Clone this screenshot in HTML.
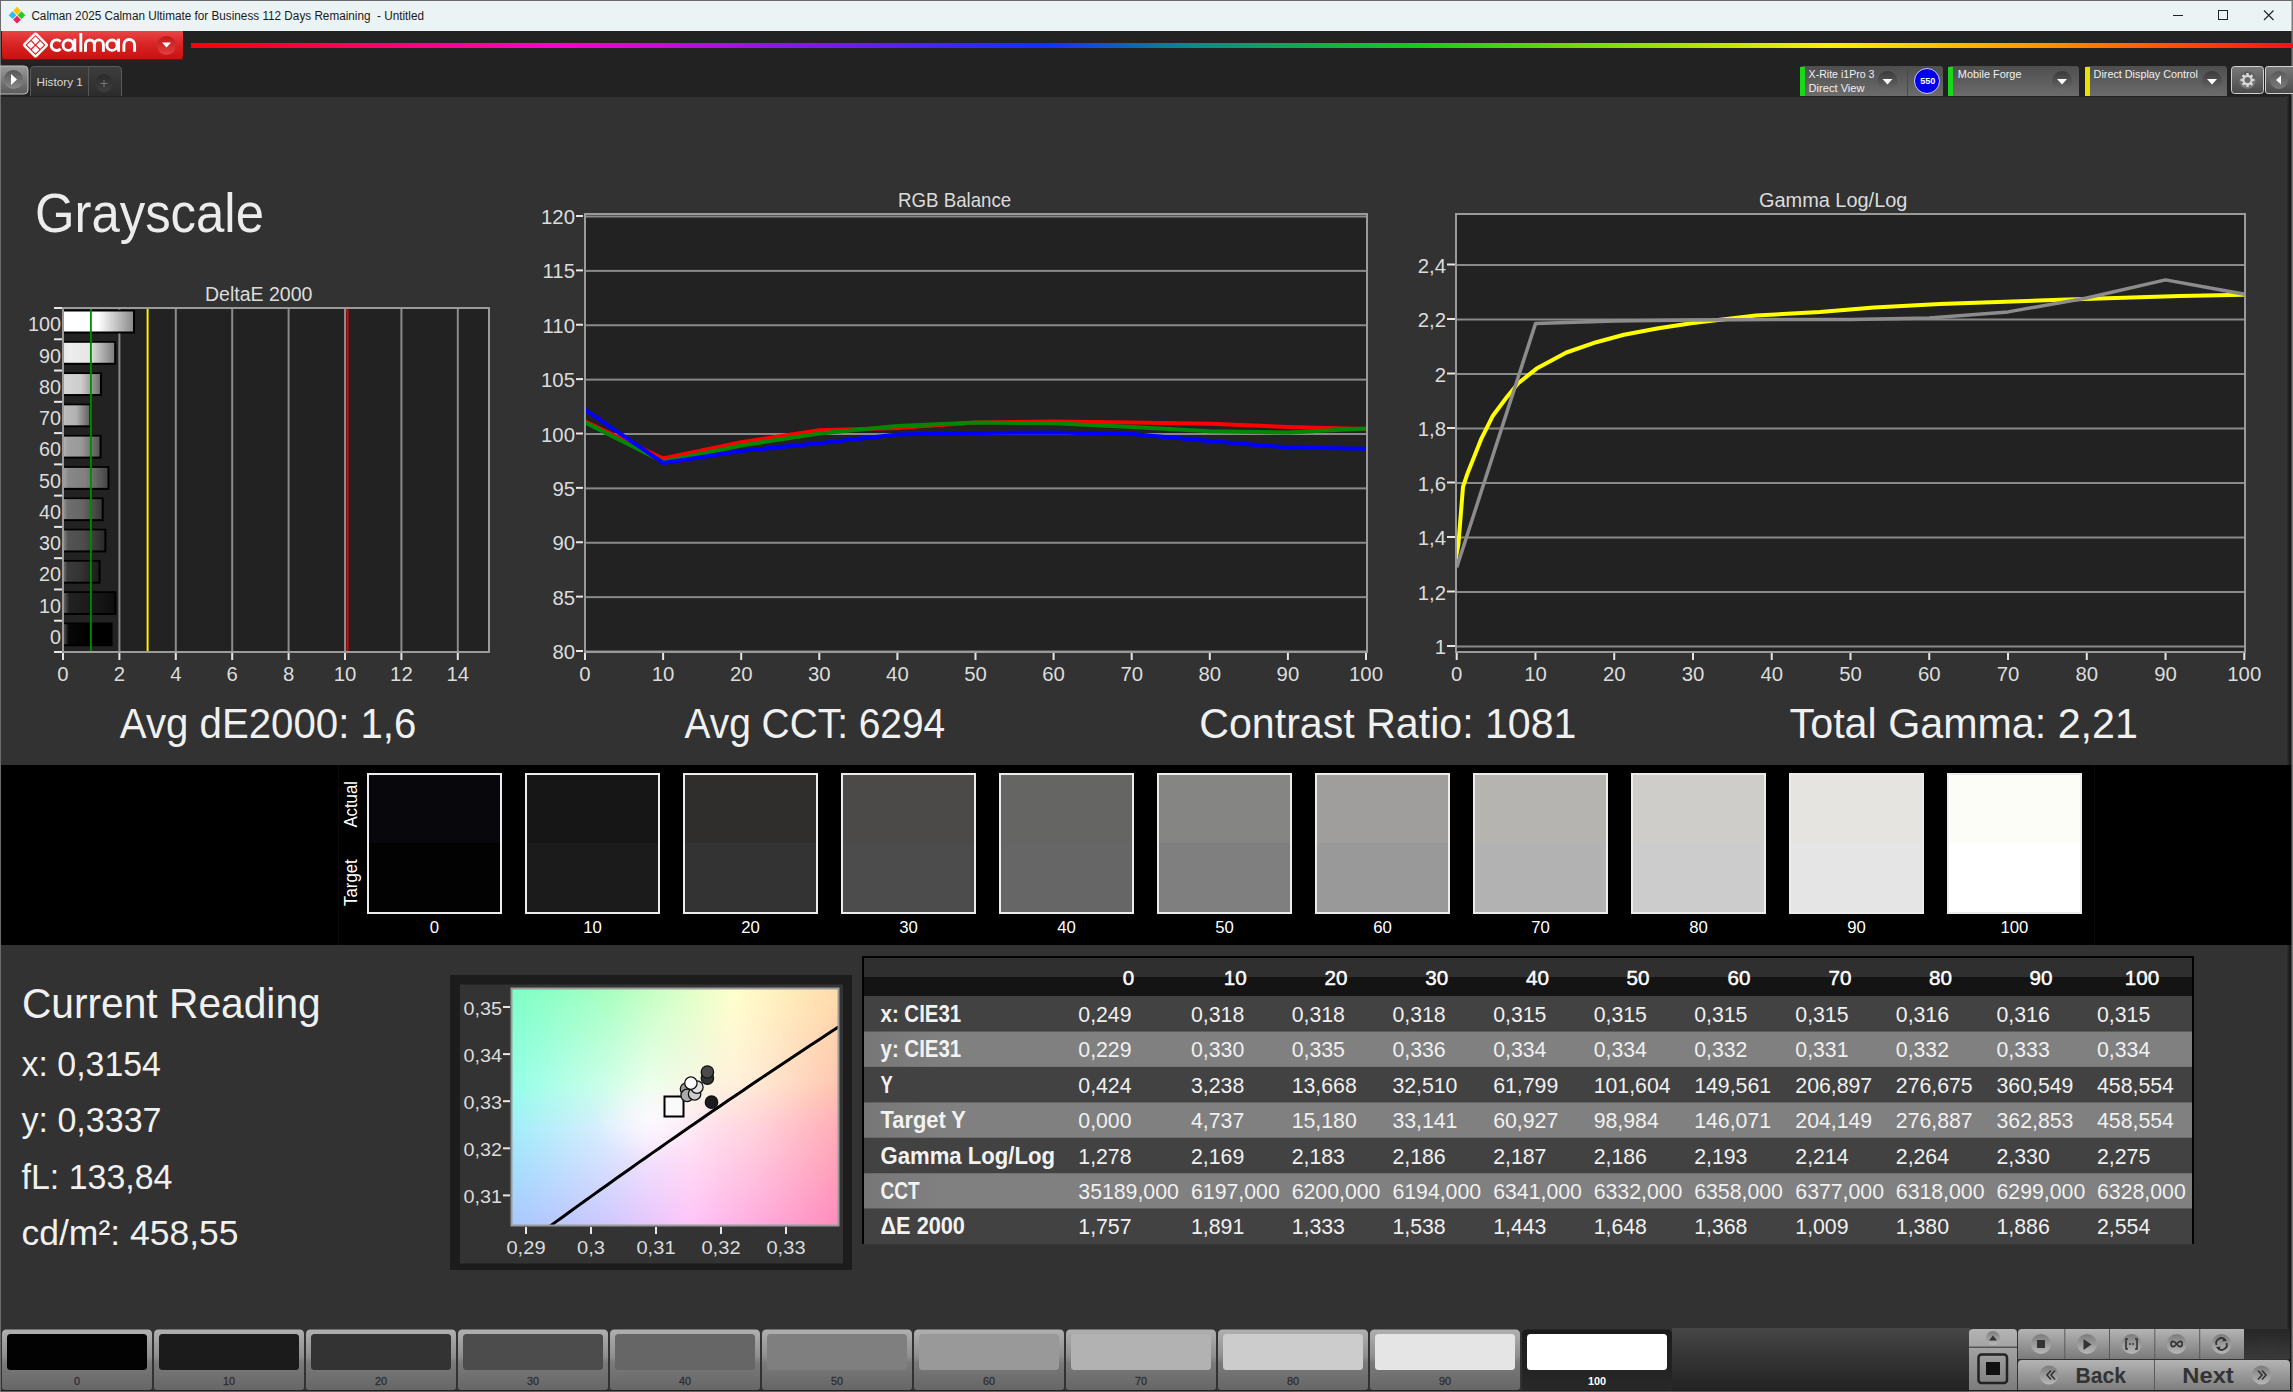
<!DOCTYPE html>
<html><head><meta charset="utf-8"><title>Calman Grayscale</title>
<style>html,body{margin:0;padding:0;background:#333;overflow:hidden;width:2293px;height:1392px}
svg{display:block;font-family:"Liberation Sans",sans-serif} text{white-space:pre}</style></head>
<body><svg width="2293" height="1392" viewBox="0 0 2293 1392">
<defs><linearGradient id="redge" x1="0" y1="0" x2="1" y2="0"><stop offset="0" stop-color="#333333"/><stop offset="1" stop-color="#0e0e0e"/></linearGradient><linearGradient id="redbar" x1="0" y1="0" x2="0" y2="1"><stop offset="0" stop-color="#e84545"/><stop offset="0.45" stop-color="#d92525"/><stop offset="1" stop-color="#c80f0f"/></linearGradient><linearGradient id="reddd" x1="0" y1="0" x2="0" y2="1"><stop offset="0" stop-color="#c01818"/><stop offset="1" stop-color="#e04040"/></linearGradient><linearGradient id="rainbow" x1="0" y1="0" x2="1" y2="0"><stop offset="0" stop-color="#ff0000"/><stop offset="0.17" stop-color="#ff00cc"/><stop offset="0.405" stop-color="#1030ff"/><stop offset="0.475" stop-color="#0a8a8a"/><stop offset="0.585" stop-color="#18cc18"/><stop offset="0.782" stop-color="#ffee00"/><stop offset="0.892" stop-color="#ff8800"/><stop offset="1" stop-color="#ff1010"/></linearGradient><linearGradient id="playbtn" x1="0" y1="0" x2="0" y2="1"><stop offset="0" stop-color="#9a9a9a"/><stop offset="1" stop-color="#5a5a5a"/></linearGradient><linearGradient id="playc" x1="0" y1="0" x2="0" y2="1"><stop offset="0" stop-color="#555"/><stop offset="1" stop-color="#8a8a8a"/></linearGradient><linearGradient id="tabbg" x1="0" y1="0" x2="0" y2="1"><stop offset="0" stop-color="#3d3d3d"/><stop offset="1" stop-color="#2c2c2c"/></linearGradient><linearGradient id="plusc" x1="0" y1="0" x2="0" y2="1"><stop offset="0" stop-color="#2a2a2a"/><stop offset="1" stop-color="#3e3e3e"/></linearGradient><linearGradient id="panel" x1="0" y1="0" x2="0" y2="1"><stop offset="0" stop-color="#4e4e4e"/><stop offset="1" stop-color="#6c6c6c"/></linearGradient><linearGradient id="ddc" x1="0" y1="0" x2="0" y2="1"><stop offset="0" stop-color="#3a3a3a"/><stop offset="1" stop-color="#6a6a6a"/></linearGradient><linearGradient id="gearbtn" x1="0" y1="0" x2="0" y2="1"><stop offset="0" stop-color="#7a7a7a"/><stop offset="1" stop-color="#4a4a4a"/></linearGradient><linearGradient id="gearc" x1="0" y1="0" x2="0" y2="1"><stop offset="0" stop-color="#5a5a5a"/><stop offset="1" stop-color="#7a7a7a"/></linearGradient><linearGradient id="bar0" x1="0" y1="0" x2="1" y2="0"><stop offset="0" stop-color="#ffffff"/><stop offset="0.12" stop-color="#ffffff"/><stop offset="0.5" stop-color="#ffffff"/><stop offset="1" stop-color="#8c8c8c"/></linearGradient><linearGradient id="bar1" x1="0" y1="0" x2="1" y2="0"><stop offset="0" stop-color="#e6e6e6"/><stop offset="0.12" stop-color="#eeeeee"/><stop offset="0.5" stop-color="#e6e6e6"/><stop offset="1" stop-color="#7e7e7e"/></linearGradient><linearGradient id="bar2" x1="0" y1="0" x2="1" y2="0"><stop offset="0" stop-color="#d4d4d4"/><stop offset="0.12" stop-color="#d4d4d4"/><stop offset="0.5" stop-color="#cccccc"/><stop offset="1" stop-color="#707070"/></linearGradient><linearGradient id="bar3" x1="0" y1="0" x2="1" y2="0"><stop offset="0" stop-color="#c4c4c4"/><stop offset="0.12" stop-color="#bababa"/><stop offset="0.5" stop-color="#b2b2b2"/><stop offset="1" stop-color="#616161"/></linearGradient><linearGradient id="bar4" x1="0" y1="0" x2="1" y2="0"><stop offset="0" stop-color="#b5b5b5"/><stop offset="0.12" stop-color="#a1a1a1"/><stop offset="0.5" stop-color="#999999"/><stop offset="1" stop-color="#545454"/></linearGradient><linearGradient id="bar5" x1="0" y1="0" x2="1" y2="0"><stop offset="0" stop-color="#a6a6a6"/><stop offset="0.12" stop-color="#888888"/><stop offset="0.5" stop-color="#808080"/><stop offset="1" stop-color="#464646"/></linearGradient><linearGradient id="bar6" x1="0" y1="0" x2="1" y2="0"><stop offset="0" stop-color="#979797"/><stop offset="0.12" stop-color="#6e6e6e"/><stop offset="0.5" stop-color="#666666"/><stop offset="1" stop-color="#383838"/></linearGradient><linearGradient id="bar7" x1="0" y1="0" x2="1" y2="0"><stop offset="0" stop-color="#878787"/><stop offset="0.12" stop-color="#545454"/><stop offset="0.5" stop-color="#4c4c4c"/><stop offset="1" stop-color="#292929"/></linearGradient><linearGradient id="bar8" x1="0" y1="0" x2="1" y2="0"><stop offset="0" stop-color="#787878"/><stop offset="0.12" stop-color="#3b3b3b"/><stop offset="0.5" stop-color="#333333"/><stop offset="1" stop-color="#1c1c1c"/></linearGradient><linearGradient id="bar9" x1="0" y1="0" x2="1" y2="0"><stop offset="0" stop-color="#696969"/><stop offset="0.12" stop-color="#222222"/><stop offset="0.5" stop-color="#1a1a1a"/><stop offset="1" stop-color="#0e0e0e"/></linearGradient><linearGradient id="bar10" x1="0" y1="0" x2="1" y2="0"><stop offset="0" stop-color="#5a5a5a"/><stop offset="0.12" stop-color="#080808"/><stop offset="0.5" stop-color="#000000"/><stop offset="1" stop-color="#000000"/></linearGradient><linearGradient id="cieTop" x1="0" y1="0" x2="1" y2="0"><stop offset="0" stop-color="#7dffc6"/><stop offset="0.3" stop-color="#a8ffc0"/><stop offset="0.68" stop-color="#ffffcc"/><stop offset="1" stop-color="#ffdcaa"/></linearGradient><linearGradient id="cieBot" x1="0" y1="0" x2="1" y2="0"><stop offset="0" stop-color="#a8c8ff"/><stop offset="0.3" stop-color="#d0c8ff"/><stop offset="0.55" stop-color="#ffc4f8"/><stop offset="1" stop-color="#ff8cbc"/></linearGradient><linearGradient id="cieMid" x1="0" y1="0" x2="1" y2="0"><stop offset="0" stop-color="#9ffff8"/><stop offset="0.42" stop-color="#ffffff"/><stop offset="0.75" stop-color="#ffe4dc"/><stop offset="1" stop-color="#ffbcb4"/></linearGradient><linearGradient id="fadeTop" x1="0" y1="0" x2="0" y2="1"><stop offset="0" stop-color="#fff"/><stop offset="1" stop-color="#000"/></linearGradient><mask id="mTop" maskContentUnits="objectBoundingBox"><rect width="1" height="1" fill="url(#fadeTop)"/></mask><linearGradient id="fadeBot" x1="0" y1="0" x2="0" y2="1"><stop offset="0" stop-color="#000"/><stop offset="1" stop-color="#fff"/></linearGradient><mask id="mBot" maskContentUnits="objectBoundingBox"><rect width="1" height="1" fill="url(#fadeBot)"/></mask><radialGradient id="cieW" cx="0.43" cy="0.55" r="0.18"><stop offset="0" stop-color="#fff" stop-opacity="0.6"/><stop offset="1" stop-color="#fff" stop-opacity="0"/></radialGradient><linearGradient id="thead" x1="0" y1="0" x2="0" y2="1"><stop offset="0" stop-color="#2f2f2f"/><stop offset="0.5" stop-color="#2f2f2f"/><stop offset="0.5" stop-color="#141414"/><stop offset="1" stop-color="#141414"/></linearGradient><linearGradient id="lrow" x1="0" y1="0" x2="1" y2="0"><stop offset="0" stop-color="#777777"/><stop offset="0.06" stop-color="#808080"/><stop offset="1" stop-color="#808080"/></linearGradient><linearGradient id="tbdark" x1="0" y1="0" x2="0" y2="1"><stop offset="0" stop-color="#474747"/><stop offset="0.5" stop-color="#333333"/><stop offset="1" stop-color="#222222"/></linearGradient><linearGradient id="swbtn" x1="0" y1="0" x2="0" y2="1"><stop offset="0" stop-color="#b0b0b0"/><stop offset="0.45" stop-color="#8e8e8e"/><stop offset="0.55" stop-color="#7a7a7a"/><stop offset="1" stop-color="#666666"/></linearGradient><linearGradient id="swsel" x1="0" y1="0" x2="0" y2="1"><stop offset="0" stop-color="#1a1a1a"/><stop offset="1" stop-color="#282828"/></linearGradient><linearGradient id="ctl" x1="0" y1="0" x2="0" y2="1"><stop offset="0" stop-color="#b4b4b4"/><stop offset="1" stop-color="#7a7a7a"/></linearGradient><linearGradient id="ctlc" x1="0" y1="0" x2="0" y2="1"><stop offset="0" stop-color="#7c7c7c"/><stop offset="1" stop-color="#b8b8b8"/></linearGradient><linearGradient id="dkc" x1="0" y1="0" x2="0" y2="1"><stop offset="0" stop-color="#2a2a2a"/><stop offset="1" stop-color="#383838"/></linearGradient><linearGradient id="dkbg" x1="0" y1="0" x2="0" y2="1"><stop offset="0" stop-color="#262626"/><stop offset="1" stop-color="#3a3a3a"/></linearGradient></defs>
<rect x="0.00" y="0.00" width="2293.00" height="1392.00" fill="#323232" />
<rect x="0.00" y="0.00" width="2293.00" height="31.00" fill="#ebf3f5" />
<rect x="0.00" y="0.00" width="2293.00" height="1.00" fill="#6b6b6b" />
<rect x="0.00" y="0.00" width="1.00" height="1392.00" fill="#6b6b6b" />
<rect x="1.00" y="31.00" width="2293.00" height="66.00" fill="#222222" />
<rect x="1.00" y="765.00" width="2293.00" height="180.00" fill="#000000" />
<rect x="338.00" y="765.00" width="1.00" height="180.00" fill="#0b0b0b" />
<rect x="2094.00" y="765.00" width="1.00" height="180.00" fill="#0b0b0b" />
<rect x="2286.50" y="96.00" width="5.00" height="669.00" fill="url(#redge)" />
<rect x="2286.50" y="945.00" width="5.00" height="447.00" fill="url(#redge)" />
<rect x="2291.50" y="0.00" width="1.50" height="1392.00" fill="#7a7a7a" />
<g transform="translate(17,15.2) rotate(45)"><rect x="-5.9" y="-5.9" width="5.5" height="5.5" fill="#ffc400"/><rect x="0.4" y="-5.9" width="5.5" height="5.5" fill="#22cc22"/><rect x="-5.9" y="0.4" width="5.5" height="5.5" fill="#33bbee"/><rect x="0.4" y="0.4" width="5.5" height="5.5" fill="#ee2255"/></g>
<text x="31.40" y="20.40" font-size="13.66" font-weight="normal" fill="#1a1a1a" textLength="392.62" lengthAdjust="spacingAndGlyphs" >Calman 2025 Calman Ultimate for Business 112 Days Remaining  - Untitled</text>
<rect x="2173.00" y="15.00" width="10.00" height="1.00" fill="#222" />
<rect x="2218.5" y="10.5" width="9" height="9" fill="none" stroke="#222" stroke-width="1"/>
<path d="M2264 10.5 L2273.5 20 M2273.5 10.5 L2264 20" stroke="#222" stroke-width="1.1" fill="none"/>
<path d="M2 31 H183 V56 Q183 60 179 60 H6 Q2 60 2 56 Z" fill="url(#redbar)"/>
<path d="M2 59.5 H183" stroke="#7a1010" stroke-width="1"/>
<g transform="translate(35.5,45) rotate(45)"><rect x="-8.3" y="-8.3" width="16.6" height="16.6" rx="1.2" fill="none" stroke="#fff" stroke-width="2.4"/><rect x="-6.0" y="-6.0" width="5.4" height="5.4" fill="#fff"/><rect x="0.6" y="-6.0" width="5.4" height="5.4" fill="#fff"/><rect x="-6.0" y="0.6" width="5.4" height="5.4" fill="#fff"/><rect x="0.6" y="0.6" width="5.4" height="5.4" fill="#fff"/></g>
<g fill="none" stroke="#ffffff" stroke-width="2.9"><path d="M60.58 41.62 A5.35 5.35 0 1 0 60.58 48.78"/><circle cx="68.2" cy="45.2" r="5.15"/><path d="M74.8 38.7 V51.8"/><path d="M80.8 33.1 V51.8"/><path d="M85.5 51.8 V44.4 A4.45 4.45 0 0 1 94.4 44.4 V51.8 M94.4 44.4 A4.5 4.5 0 0 1 103.4 44.4 V51.8"/><circle cx="112" cy="45.2" r="5.15"/><path d="M118.6 38.7 V51.8"/><path d="M123.9 51.8 V44.9 A5.35 5.35 0 0 1 134.6 44.9 V51.8"/></g>
<circle cx="166.5" cy="45.5" r="9.5" fill="url(#reddd)"/>
<path d="M162 42.5 H171 L166.5 47.5 Z" fill="#fff"/>
<rect x="191.00" y="43.00" width="2102.00" height="5.00" fill="url(#rainbow)" />
<path d="M0 66 H24 Q28 66 28 70 V90 Q28 94 24 94 H0 Z" fill="url(#playbtn)" stroke="#bdbdbd" stroke-width="1"/>
<circle cx="13.5" cy="79.5" r="9.5" fill="url(#playc)"/>
<path d="M11 74 L17 79.5 L11 85 Z" fill="#fff"/>
<path d="M30.5 96 V70 Q30.5 66.5 34 66.5 H118 Q121.5 66.5 121.5 70 V96" fill="url(#tabbg)" stroke="#5a5a5a" stroke-width="1"/>
<rect x="88.00" y="67.00" width="1.00" height="29.00" fill="#555" />
<text x="36.50" y="86.10" font-size="11.77" font-weight="normal" fill="#d8d8d8" textLength="46.40" lengthAdjust="spacingAndGlyphs" >History 1</text>
<circle cx="104" cy="83" r="9" fill="url(#plusc)"/>
<path d="M100.5 83.5 H107.5 M104 80 V87" stroke="#777" stroke-width="1"/>
<path d="M1800 96 V69 Q1800 66 1803 66 H1940 Q1943 66 1943 69 V96 Z" fill="url(#panel)"/>
<rect x="1800.00" y="67.00" width="5.00" height="29.00" fill="#18d818" />
<rect x="1907.00" y="69.00" width="1.00" height="27.00" fill="#4a4a4a" />
<text x="1808.60" y="77.90" font-size="11.48" font-weight="normal" fill="#f0f0f0" textLength="65.90" lengthAdjust="spacingAndGlyphs" >X-Rite i1Pro 3</text>
<text x="1808.60" y="91.70" font-size="11.19" font-weight="normal" fill="#f0f0f0" textLength="55.89" lengthAdjust="spacingAndGlyphs" >Direct View</text>
<circle cx="1887.5" cy="81" r="10" fill="url(#ddc)"/>
<path d="M1882.5 79 H1892.5 L1887.5 84.5 Z" fill="#fff"/>
<circle cx="1927" cy="81" r="12.5" fill="#0000ee" stroke="#c8c8ff" stroke-width="1"/>
<text x="1920.20" y="84.20" font-size="8.58" font-weight="bold" fill="#fff" textLength="15.19" lengthAdjust="spacingAndGlyphs" >550</text>
<path d="M1948 96 V69 Q1948 66 1951 66 H2076 Q2079 66 2079 69 V96 Z" fill="url(#panel)"/>
<rect x="1948.00" y="67.00" width="5.00" height="29.00" fill="#18d818" />
<text x="1957.80" y="77.90" font-size="11.48" font-weight="normal" fill="#f0f0f0" textLength="63.71" lengthAdjust="spacingAndGlyphs" >Mobile Forge</text>
<circle cx="2062" cy="81" r="10" fill="url(#ddc)"/>
<path d="M2057 79 H2067 L2062 84.5 Z" fill="#fff"/>
<path d="M2085 96 V69 Q2085 66 2088 66 H2224 Q2227 66 2227 69 V96 Z" fill="url(#panel)"/>
<rect x="2085.00" y="67.00" width="5.00" height="29.00" fill="#e8e000" />
<text x="2093.60" y="77.90" font-size="11.48" font-weight="normal" fill="#f0f0f0" textLength="104.40" lengthAdjust="spacingAndGlyphs" >Direct Display Control</text>
<circle cx="2212" cy="81" r="10" fill="url(#ddc)"/>
<path d="M2207 79 H2217 L2212 84.5 Z" fill="#fff"/>
<rect x="2231.5" y="66.5" width="32" height="27" rx="3" fill="url(#gearbtn)" stroke="#d0d0d0" stroke-width="1"/>
<circle cx="2247.5" cy="80" r="8.8" fill="url(#gearc)"/>
<g transform="translate(2247.5,80)" fill="#d8d8d8"><rect x="-1.2" y="-7" width="2.4" height="3" transform="rotate(0)"/><rect x="-1.2" y="-7" width="2.4" height="3" transform="rotate(45)"/><rect x="-1.2" y="-7" width="2.4" height="3" transform="rotate(90)"/><rect x="-1.2" y="-7" width="2.4" height="3" transform="rotate(135)"/><rect x="-1.2" y="-7" width="2.4" height="3" transform="rotate(180)"/><rect x="-1.2" y="-7" width="2.4" height="3" transform="rotate(225)"/><rect x="-1.2" y="-7" width="2.4" height="3" transform="rotate(270)"/><rect x="-1.2" y="-7" width="2.4" height="3" transform="rotate(315)"/><circle r="4.1" fill="none" stroke="#d8d8d8" stroke-width="2.1"/></g>
<path d="M2293 66.5 H2268 Q2265.5 66.5 2265.5 69 V91 Q2265.5 93.5 2268 93.5 H2293" fill="url(#gearbtn)" stroke="#d0d0d0" stroke-width="1"/>
<circle cx="2279" cy="80" r="9" fill="url(#gearc)"/>
<path d="M2281 75.5 V84.5 L2276 80 Z" fill="#fff"/>
<text x="34.90" y="231.80" font-size="54.94" font-weight="normal" fill="#ececec" textLength="229.08" lengthAdjust="spacingAndGlyphs" >Grayscale</text>
<text x="205.00" y="300.90" font-size="19.77" font-weight="normal" fill="#dcdcdc" textLength="107.38" lengthAdjust="spacingAndGlyphs" >DeltaE 2000</text>
<rect x="63.00" y="308.00" width="426.00" height="344.00" fill="#222222" />
<rect x="118.40" y="308.00" width="2.00" height="344.00" fill="#8a8a8a" />
<rect x="174.80" y="308.00" width="2.00" height="344.00" fill="#8a8a8a" />
<rect x="231.20" y="308.00" width="2.00" height="344.00" fill="#8a8a8a" />
<rect x="287.60" y="308.00" width="2.00" height="344.00" fill="#8a8a8a" />
<rect x="344.00" y="308.00" width="2.00" height="344.00" fill="#8a8a8a" />
<rect x="400.40" y="308.00" width="2.00" height="344.00" fill="#8a8a8a" />
<rect x="456.80" y="308.00" width="2.00" height="344.00" fill="#8a8a8a" />
<rect x="63.00" y="309.80" width="72.02" height="23.70" fill="#000" />
<rect x="63.00" y="311.50" width="70.02" height="20.00" fill="url(#bar0)" />
<text x="27.99" y="331.30" font-size="19.77" font-weight="normal" fill="#dcdcdc" textLength="32.98" lengthAdjust="spacingAndGlyphs" >100</text>
<rect x="63.00" y="341.07" width="53.19" height="23.70" fill="#000" />
<rect x="63.00" y="342.77" width="51.19" height="20.00" fill="url(#bar1)" />
<text x="39.06" y="362.57" font-size="19.77" font-weight="normal" fill="#dcdcdc" textLength="21.99" lengthAdjust="spacingAndGlyphs" >90</text>
<rect x="63.00" y="372.35" width="38.92" height="23.70" fill="#000" />
<rect x="63.00" y="374.05" width="36.92" height="20.00" fill="url(#bar2)" />
<text x="39.06" y="393.85" font-size="19.77" font-weight="normal" fill="#dcdcdc" textLength="21.99" lengthAdjust="spacingAndGlyphs" >80</text>
<rect x="63.00" y="403.62" width="28.45" height="23.70" fill="#000" />
<rect x="63.00" y="405.32" width="26.45" height="20.00" fill="url(#bar3)" />
<text x="39.06" y="425.12" font-size="19.77" font-weight="normal" fill="#dcdcdc" textLength="21.99" lengthAdjust="spacingAndGlyphs" >70</text>
<rect x="63.00" y="434.89" width="38.58" height="23.70" fill="#000" />
<rect x="63.00" y="436.59" width="36.58" height="20.00" fill="url(#bar4)" />
<text x="39.06" y="456.39" font-size="19.77" font-weight="normal" fill="#dcdcdc" textLength="21.99" lengthAdjust="spacingAndGlyphs" >60</text>
<rect x="63.00" y="466.16" width="46.47" height="23.70" fill="#000" />
<rect x="63.00" y="467.86" width="44.47" height="20.00" fill="url(#bar5)" />
<text x="39.06" y="487.66" font-size="19.77" font-weight="normal" fill="#dcdcdc" textLength="21.99" lengthAdjust="spacingAndGlyphs" >50</text>
<rect x="63.00" y="497.44" width="40.69" height="23.70" fill="#000" />
<rect x="63.00" y="499.14" width="38.69" height="20.00" fill="url(#bar6)" />
<text x="39.06" y="518.94" font-size="19.77" font-weight="normal" fill="#dcdcdc" textLength="21.99" lengthAdjust="spacingAndGlyphs" >40</text>
<rect x="63.00" y="528.71" width="43.37" height="23.70" fill="#000" />
<rect x="63.00" y="530.41" width="41.37" height="20.00" fill="url(#bar7)" />
<text x="39.06" y="550.21" font-size="19.77" font-weight="normal" fill="#dcdcdc" textLength="21.99" lengthAdjust="spacingAndGlyphs" >30</text>
<rect x="63.00" y="559.98" width="37.59" height="23.70" fill="#000" />
<rect x="63.00" y="561.68" width="35.59" height="20.00" fill="url(#bar8)" />
<text x="39.06" y="581.48" font-size="19.77" font-weight="normal" fill="#dcdcdc" textLength="21.99" lengthAdjust="spacingAndGlyphs" >20</text>
<rect x="63.00" y="591.25" width="53.33" height="23.70" fill="#000" />
<rect x="63.00" y="592.95" width="51.33" height="20.00" fill="url(#bar9)" />
<text x="39.06" y="612.75" font-size="19.77" font-weight="normal" fill="#dcdcdc" textLength="21.99" lengthAdjust="spacingAndGlyphs" >10</text>
<rect x="63.00" y="622.53" width="49.55" height="23.70" fill="#000" />
<rect x="63.00" y="624.23" width="47.55" height="20.00" fill="url(#bar10)" />
<text x="50.03" y="644.03" font-size="19.77" font-weight="normal" fill="#dcdcdc" textLength="10.99" lengthAdjust="spacingAndGlyphs" >0</text>
<rect x="90.00" y="308.00" width="1.80" height="344.00" fill="#008a00" />
<rect x="146.60" y="308.00" width="2.00" height="344.00" fill="#ffee00" />
<rect x="346.50" y="308.00" width="2.00" height="344.00" fill="#ee0000" />
<rect x="63" y="308" width="426" height="344" fill="none" stroke="#9a9a9a" stroke-width="2"/>
<rect x="54.00" y="307.00" width="8.00" height="2.00" fill="#e6e6e6" />
<rect x="54.00" y="338.27" width="8.00" height="2.00" fill="#e6e6e6" />
<rect x="54.00" y="369.55" width="8.00" height="2.00" fill="#e6e6e6" />
<rect x="54.00" y="400.82" width="8.00" height="2.00" fill="#e6e6e6" />
<rect x="54.00" y="432.09" width="8.00" height="2.00" fill="#e6e6e6" />
<rect x="54.00" y="463.36" width="8.00" height="2.00" fill="#e6e6e6" />
<rect x="54.00" y="494.64" width="8.00" height="2.00" fill="#e6e6e6" />
<rect x="54.00" y="525.91" width="8.00" height="2.00" fill="#e6e6e6" />
<rect x="54.00" y="557.18" width="8.00" height="2.00" fill="#e6e6e6" />
<rect x="54.00" y="588.45" width="8.00" height="2.00" fill="#e6e6e6" />
<rect x="54.00" y="619.73" width="8.00" height="2.00" fill="#e6e6e6" />
<rect x="54.00" y="651.00" width="8.00" height="2.00" fill="#e6e6e6" />
<rect x="62.00" y="653.00" width="2.00" height="7.00" fill="#e6e6e6" />
<text x="57.35" y="681.00" font-size="20.35" font-weight="normal" fill="#dcdcdc" textLength="11.32" lengthAdjust="spacingAndGlyphs" >0</text>
<rect x="118.40" y="653.00" width="2.00" height="7.00" fill="#e6e6e6" />
<text x="113.75" y="681.00" font-size="20.35" font-weight="normal" fill="#dcdcdc" textLength="11.32" lengthAdjust="spacingAndGlyphs" >2</text>
<rect x="174.80" y="653.00" width="2.00" height="7.00" fill="#e6e6e6" />
<text x="170.15" y="681.00" font-size="20.35" font-weight="normal" fill="#dcdcdc" textLength="11.32" lengthAdjust="spacingAndGlyphs" >4</text>
<rect x="231.20" y="653.00" width="2.00" height="7.00" fill="#e6e6e6" />
<text x="226.55" y="681.00" font-size="20.35" font-weight="normal" fill="#dcdcdc" textLength="11.32" lengthAdjust="spacingAndGlyphs" >6</text>
<rect x="287.60" y="653.00" width="2.00" height="7.00" fill="#e6e6e6" />
<text x="282.95" y="681.00" font-size="20.35" font-weight="normal" fill="#dcdcdc" textLength="11.32" lengthAdjust="spacingAndGlyphs" >8</text>
<rect x="344.00" y="653.00" width="2.00" height="7.00" fill="#e6e6e6" />
<text x="333.71" y="681.00" font-size="20.35" font-weight="normal" fill="#dcdcdc" textLength="22.64" lengthAdjust="spacingAndGlyphs" >10</text>
<rect x="400.40" y="653.00" width="2.00" height="7.00" fill="#e6e6e6" />
<text x="390.11" y="681.00" font-size="20.35" font-weight="normal" fill="#dcdcdc" textLength="22.64" lengthAdjust="spacingAndGlyphs" >12</text>
<rect x="456.80" y="653.00" width="2.00" height="7.00" fill="#e6e6e6" />
<text x="446.51" y="681.00" font-size="20.35" font-weight="normal" fill="#dcdcdc" textLength="22.64" lengthAdjust="spacingAndGlyphs" >14</text>
<text x="898.00" y="206.90" font-size="20.64" font-weight="normal" fill="#dcdcdc" textLength="113.18" lengthAdjust="spacingAndGlyphs" >RGB Balance</text>
<rect x="585.00" y="214.00" width="782.00" height="438.00" fill="#222222" />
<rect x="585.00" y="650.50" width="782.00" height="2.00" fill="#8a8a8a" />
<rect x="576.00" y="650.00" width="7.00" height="2.00" fill="#e6e6e6" />
<text x="552.41" y="659.00" font-size="20.35" font-weight="normal" fill="#dcdcdc" textLength="22.64" lengthAdjust="spacingAndGlyphs" >80</text>
<rect x="585.00" y="596.12" width="782.00" height="2.00" fill="#8a8a8a" />
<rect x="576.00" y="595.62" width="7.00" height="2.00" fill="#e6e6e6" />
<text x="552.41" y="604.62" font-size="20.35" font-weight="normal" fill="#dcdcdc" textLength="22.64" lengthAdjust="spacingAndGlyphs" >85</text>
<rect x="585.00" y="541.75" width="782.00" height="2.00" fill="#8a8a8a" />
<rect x="576.00" y="541.25" width="7.00" height="2.00" fill="#e6e6e6" />
<text x="552.41" y="550.25" font-size="20.35" font-weight="normal" fill="#dcdcdc" textLength="22.64" lengthAdjust="spacingAndGlyphs" >90</text>
<rect x="585.00" y="487.38" width="782.00" height="2.00" fill="#8a8a8a" />
<rect x="576.00" y="486.88" width="7.00" height="2.00" fill="#e6e6e6" />
<text x="552.41" y="495.88" font-size="20.35" font-weight="normal" fill="#dcdcdc" textLength="22.64" lengthAdjust="spacingAndGlyphs" >95</text>
<rect x="585.00" y="433.00" width="782.00" height="2.00" fill="#8a8a8a" />
<rect x="576.00" y="432.50" width="7.00" height="2.00" fill="#e6e6e6" />
<text x="541.02" y="441.50" font-size="20.35" font-weight="normal" fill="#dcdcdc" textLength="33.95" lengthAdjust="spacingAndGlyphs" >100</text>
<rect x="585.00" y="378.62" width="782.00" height="2.00" fill="#8a8a8a" />
<rect x="576.00" y="378.12" width="7.00" height="2.00" fill="#e6e6e6" />
<text x="541.02" y="387.12" font-size="20.35" font-weight="normal" fill="#dcdcdc" textLength="33.95" lengthAdjust="spacingAndGlyphs" >105</text>
<rect x="585.00" y="324.25" width="782.00" height="2.00" fill="#8a8a8a" />
<rect x="576.00" y="323.75" width="7.00" height="2.00" fill="#e6e6e6" />
<text x="542.54" y="332.75" font-size="20.35" font-weight="normal" fill="#dcdcdc" textLength="32.44" lengthAdjust="spacingAndGlyphs" >110</text>
<rect x="585.00" y="269.88" width="782.00" height="2.00" fill="#8a8a8a" />
<rect x="576.00" y="269.38" width="7.00" height="2.00" fill="#e6e6e6" />
<text x="542.54" y="278.38" font-size="20.35" font-weight="normal" fill="#dcdcdc" textLength="32.44" lengthAdjust="spacingAndGlyphs" >115</text>
<rect x="585.00" y="215.50" width="782.00" height="2.00" fill="#8a8a8a" />
<rect x="576.00" y="215.00" width="7.00" height="2.00" fill="#e6e6e6" />
<text x="541.02" y="224.00" font-size="20.35" font-weight="normal" fill="#dcdcdc" textLength="33.95" lengthAdjust="spacingAndGlyphs" >120</text>
<rect x="585" y="214" width="782" height="438" fill="none" stroke="#9a9a9a" stroke-width="2"/>
<rect x="584.00" y="653.00" width="2.00" height="7.00" fill="#e6e6e6" />
<text x="579.35" y="681.00" font-size="20.35" font-weight="normal" fill="#dcdcdc" textLength="11.32" lengthAdjust="spacingAndGlyphs" >0</text>
<rect x="662.10" y="653.00" width="2.00" height="7.00" fill="#e6e6e6" />
<text x="651.81" y="681.00" font-size="20.35" font-weight="normal" fill="#dcdcdc" textLength="22.64" lengthAdjust="spacingAndGlyphs" >10</text>
<rect x="740.20" y="653.00" width="2.00" height="7.00" fill="#e6e6e6" />
<text x="729.91" y="681.00" font-size="20.35" font-weight="normal" fill="#dcdcdc" textLength="22.64" lengthAdjust="spacingAndGlyphs" >20</text>
<rect x="818.30" y="653.00" width="2.00" height="7.00" fill="#e6e6e6" />
<text x="808.01" y="681.00" font-size="20.35" font-weight="normal" fill="#dcdcdc" textLength="22.64" lengthAdjust="spacingAndGlyphs" >30</text>
<rect x="896.40" y="653.00" width="2.00" height="7.00" fill="#e6e6e6" />
<text x="886.11" y="681.00" font-size="20.35" font-weight="normal" fill="#dcdcdc" textLength="22.64" lengthAdjust="spacingAndGlyphs" >40</text>
<rect x="974.50" y="653.00" width="2.00" height="7.00" fill="#e6e6e6" />
<text x="964.21" y="681.00" font-size="20.35" font-weight="normal" fill="#dcdcdc" textLength="22.64" lengthAdjust="spacingAndGlyphs" >50</text>
<rect x="1052.60" y="653.00" width="2.00" height="7.00" fill="#e6e6e6" />
<text x="1042.31" y="681.00" font-size="20.35" font-weight="normal" fill="#dcdcdc" textLength="22.64" lengthAdjust="spacingAndGlyphs" >60</text>
<rect x="1130.70" y="653.00" width="2.00" height="7.00" fill="#e6e6e6" />
<text x="1120.41" y="681.00" font-size="20.35" font-weight="normal" fill="#dcdcdc" textLength="22.64" lengthAdjust="spacingAndGlyphs" >70</text>
<rect x="1208.80" y="653.00" width="2.00" height="7.00" fill="#e6e6e6" />
<text x="1198.51" y="681.00" font-size="20.35" font-weight="normal" fill="#dcdcdc" textLength="22.64" lengthAdjust="spacingAndGlyphs" >80</text>
<rect x="1286.90" y="653.00" width="2.00" height="7.00" fill="#e6e6e6" />
<text x="1276.61" y="681.00" font-size="20.35" font-weight="normal" fill="#dcdcdc" textLength="22.64" lengthAdjust="spacingAndGlyphs" >90</text>
<rect x="1365.00" y="653.00" width="2.00" height="7.00" fill="#e6e6e6" />
<text x="1349.01" y="681.00" font-size="20.35" font-weight="normal" fill="#dcdcdc" textLength="33.95" lengthAdjust="spacingAndGlyphs" >100</text>
<svg x="586" y="214" width="780" height="438" overflow="hidden" viewBox="586 214 780 438">
<polyline points="585.0,421.5 663.1,458.5 741.2,442.2 819.3,430.2 897.4,428.1 975.5,422.6 1053.6,421.5 1131.7,422.6 1209.8,423.7 1287.9,427.0 1366.0,429.1" fill="none" stroke="#ff0000" stroke-width="4" stroke-linejoin="round"/>
<polyline points="585.0,422.6 663.1,461.8 741.2,445.5 819.3,433.5 897.4,425.9 975.5,422.6 1053.6,423.2 1131.7,427.0 1209.8,431.3 1287.9,432.4 1366.0,428.6" fill="none" stroke="#008800" stroke-width="4" stroke-linejoin="round"/>
<polyline points="585.0,409.6 663.1,462.9 741.2,450.9 819.3,443.3 897.4,434.6 975.5,433.0 1053.6,432.4 1131.7,434.0 1209.8,441.1 1287.9,447.6 1366.0,448.7" fill="none" stroke="#0000ff" stroke-width="4" stroke-linejoin="round"/>
</svg>
<text x="1759.00" y="207.30" font-size="21.08" font-weight="normal" fill="#dcdcdc" textLength="148.38" lengthAdjust="spacingAndGlyphs" >Gamma Log/Log</text>
<rect x="1456.00" y="214.00" width="789.00" height="438.00" fill="#222222" />
<rect x="1456.00" y="645.50" width="789.00" height="2.00" fill="#8a8a8a" />
<rect x="1447.00" y="645.00" width="8.00" height="2.00" fill="#e6e6e6" />
<text x="1434.71" y="654.00" font-size="20.35" font-weight="normal" fill="#dcdcdc" textLength="11.32" lengthAdjust="spacingAndGlyphs" >1</text>
<rect x="1456.00" y="591.00" width="789.00" height="2.00" fill="#8a8a8a" />
<rect x="1447.00" y="590.50" width="8.00" height="2.00" fill="#e6e6e6" />
<text x="1417.71" y="599.50" font-size="20.35" font-weight="normal" fill="#dcdcdc" textLength="28.29" lengthAdjust="spacingAndGlyphs" >1,2</text>
<rect x="1456.00" y="536.50" width="789.00" height="2.00" fill="#8a8a8a" />
<rect x="1447.00" y="536.00" width="8.00" height="2.00" fill="#e6e6e6" />
<text x="1417.71" y="545.00" font-size="20.35" font-weight="normal" fill="#dcdcdc" textLength="28.29" lengthAdjust="spacingAndGlyphs" >1,4</text>
<rect x="1456.00" y="482.00" width="789.00" height="2.00" fill="#8a8a8a" />
<rect x="1447.00" y="481.50" width="8.00" height="2.00" fill="#e6e6e6" />
<text x="1417.71" y="490.50" font-size="20.35" font-weight="normal" fill="#dcdcdc" textLength="28.29" lengthAdjust="spacingAndGlyphs" >1,6</text>
<rect x="1456.00" y="427.50" width="789.00" height="2.00" fill="#8a8a8a" />
<rect x="1447.00" y="427.00" width="8.00" height="2.00" fill="#e6e6e6" />
<text x="1417.71" y="436.00" font-size="20.35" font-weight="normal" fill="#dcdcdc" textLength="28.29" lengthAdjust="spacingAndGlyphs" >1,8</text>
<rect x="1456.00" y="373.00" width="789.00" height="2.00" fill="#8a8a8a" />
<rect x="1447.00" y="372.50" width="8.00" height="2.00" fill="#e6e6e6" />
<text x="1434.71" y="381.50" font-size="20.35" font-weight="normal" fill="#dcdcdc" textLength="11.32" lengthAdjust="spacingAndGlyphs" >2</text>
<rect x="1456.00" y="318.50" width="789.00" height="2.00" fill="#8a8a8a" />
<rect x="1447.00" y="318.00" width="8.00" height="2.00" fill="#e6e6e6" />
<text x="1417.71" y="327.00" font-size="20.35" font-weight="normal" fill="#dcdcdc" textLength="28.29" lengthAdjust="spacingAndGlyphs" >2,2</text>
<rect x="1456.00" y="264.00" width="789.00" height="2.00" fill="#8a8a8a" />
<rect x="1447.00" y="263.50" width="8.00" height="2.00" fill="#e6e6e6" />
<text x="1417.71" y="272.50" font-size="20.35" font-weight="normal" fill="#dcdcdc" textLength="28.29" lengthAdjust="spacingAndGlyphs" >2,4</text>
<rect x="1456" y="214" width="789" height="438" fill="none" stroke="#9a9a9a" stroke-width="2"/>
<rect x="1455.70" y="653.00" width="2.00" height="7.00" fill="#e6e6e6" />
<text x="1451.05" y="681.00" font-size="20.35" font-weight="normal" fill="#dcdcdc" textLength="11.32" lengthAdjust="spacingAndGlyphs" >0</text>
<rect x="1534.46" y="653.00" width="2.00" height="7.00" fill="#e6e6e6" />
<text x="1524.17" y="681.00" font-size="20.35" font-weight="normal" fill="#dcdcdc" textLength="22.64" lengthAdjust="spacingAndGlyphs" >10</text>
<rect x="1613.22" y="653.00" width="2.00" height="7.00" fill="#e6e6e6" />
<text x="1602.93" y="681.00" font-size="20.35" font-weight="normal" fill="#dcdcdc" textLength="22.64" lengthAdjust="spacingAndGlyphs" >20</text>
<rect x="1691.98" y="653.00" width="2.00" height="7.00" fill="#e6e6e6" />
<text x="1681.69" y="681.00" font-size="20.35" font-weight="normal" fill="#dcdcdc" textLength="22.64" lengthAdjust="spacingAndGlyphs" >30</text>
<rect x="1770.74" y="653.00" width="2.00" height="7.00" fill="#e6e6e6" />
<text x="1760.45" y="681.00" font-size="20.35" font-weight="normal" fill="#dcdcdc" textLength="22.64" lengthAdjust="spacingAndGlyphs" >40</text>
<rect x="1849.50" y="653.00" width="2.00" height="7.00" fill="#e6e6e6" />
<text x="1839.21" y="681.00" font-size="20.35" font-weight="normal" fill="#dcdcdc" textLength="22.64" lengthAdjust="spacingAndGlyphs" >50</text>
<rect x="1928.26" y="653.00" width="2.00" height="7.00" fill="#e6e6e6" />
<text x="1917.97" y="681.00" font-size="20.35" font-weight="normal" fill="#dcdcdc" textLength="22.64" lengthAdjust="spacingAndGlyphs" >60</text>
<rect x="2007.02" y="653.00" width="2.00" height="7.00" fill="#e6e6e6" />
<text x="1996.73" y="681.00" font-size="20.35" font-weight="normal" fill="#dcdcdc" textLength="22.64" lengthAdjust="spacingAndGlyphs" >70</text>
<rect x="2085.78" y="653.00" width="2.00" height="7.00" fill="#e6e6e6" />
<text x="2075.49" y="681.00" font-size="20.35" font-weight="normal" fill="#dcdcdc" textLength="22.64" lengthAdjust="spacingAndGlyphs" >80</text>
<rect x="2164.54" y="653.00" width="2.00" height="7.00" fill="#e6e6e6" />
<text x="2154.25" y="681.00" font-size="20.35" font-weight="normal" fill="#dcdcdc" textLength="22.64" lengthAdjust="spacingAndGlyphs" >90</text>
<rect x="2243.30" y="653.00" width="2.00" height="7.00" fill="#e6e6e6" />
<text x="2227.31" y="681.00" font-size="20.35" font-weight="normal" fill="#dcdcdc" textLength="33.95" lengthAdjust="spacingAndGlyphs" >100</text>
<svg x="1457" y="214" width="787" height="438" overflow="hidden" viewBox="1457 214 787 438">
<polyline points="1454.3,566.2 1458.4,544.4 1463.0,486.9 1467.6,473.2 1481.4,438.6 1492.9,415.7 1506.7,397.2 1518.2,383.3 1536.6,368.6 1566.4,352.5 1596.3,342.2 1623.9,334.8 1658.4,328.3 1693.0,323.1 1756.0,315.5 1819.8,311.9 1874.1,307.6 1939.9,304.0 2060.0,299.7 2179.7,296.1 2248.2,294.7" fill="none" stroke="#ffff00" stroke-width="4" stroke-linejoin="round"/>
<polyline points="1456.7,567.5 1535.5,323.6 1614.2,320.9 1693.0,320.1 1771.7,319.5 1850.5,319.5 1929.3,317.9 2008.0,311.9 2086.8,298.0 2165.5,279.9 2244.3,294.2" fill="none" stroke="#8c8c8c" stroke-width="3.5" stroke-linejoin="round"/>
</svg>
<text x="119.80" y="737.60" font-size="42.59" font-weight="normal" fill="#f0f0f0" textLength="296.57" lengthAdjust="spacingAndGlyphs" >Avg dE2000: 1,6</text>
<text x="684.50" y="737.60" font-size="42.59" font-weight="normal" fill="#f0f0f0" textLength="260.71" lengthAdjust="spacingAndGlyphs" >Avg CCT: 6294</text>
<text x="1199.30" y="737.60" font-size="42.59" font-weight="normal" fill="#f0f0f0" textLength="377.18" lengthAdjust="spacingAndGlyphs" >Contrast Ratio: 1081</text>
<text x="1789.60" y="737.60" font-size="42.59" font-weight="normal" fill="#f0f0f0" textLength="348.33" lengthAdjust="spacingAndGlyphs" >Total Gamma: 2,21</text>
<rect x="367.00" y="773.00" width="135.00" height="141.00" fill="#ececec" />
<rect x="369.00" y="775.00" width="131.00" height="68.00" fill="#07070c" />
<rect x="369.00" y="843.00" width="131.00" height="69.00" fill="#020202" />
<text x="429.86" y="932.50" font-size="16.72" font-weight="normal" fill="#ffffff" textLength="9.30" lengthAdjust="spacingAndGlyphs" >0</text>
<rect x="525.00" y="773.00" width="135.00" height="141.00" fill="#ececec" />
<rect x="527.00" y="775.00" width="131.00" height="68.00" fill="#161616" />
<rect x="527.00" y="843.00" width="131.00" height="69.00" fill="#1b1b1b" />
<text x="583.22" y="932.50" font-size="16.72" font-weight="normal" fill="#ffffff" textLength="18.59" lengthAdjust="spacingAndGlyphs" >10</text>
<rect x="683.00" y="773.00" width="135.00" height="141.00" fill="#ececec" />
<rect x="685.00" y="775.00" width="131.00" height="68.00" fill="#302e2c" />
<rect x="685.00" y="843.00" width="131.00" height="69.00" fill="#333333" />
<text x="741.22" y="932.50" font-size="16.72" font-weight="normal" fill="#ffffff" textLength="18.59" lengthAdjust="spacingAndGlyphs" >20</text>
<rect x="841.00" y="773.00" width="135.00" height="141.00" fill="#ececec" />
<rect x="843.00" y="775.00" width="131.00" height="68.00" fill="#4b4a48" />
<rect x="843.00" y="843.00" width="131.00" height="69.00" fill="#4c4c4c" />
<text x="899.22" y="932.50" font-size="16.72" font-weight="normal" fill="#ffffff" textLength="18.59" lengthAdjust="spacingAndGlyphs" >30</text>
<rect x="999.00" y="773.00" width="135.00" height="141.00" fill="#ececec" />
<rect x="1001.00" y="775.00" width="131.00" height="68.00" fill="#656563" />
<rect x="1001.00" y="843.00" width="131.00" height="69.00" fill="#666666" />
<text x="1057.22" y="932.50" font-size="16.72" font-weight="normal" fill="#ffffff" textLength="18.59" lengthAdjust="spacingAndGlyphs" >40</text>
<rect x="1157.00" y="773.00" width="135.00" height="141.00" fill="#ececec" />
<rect x="1159.00" y="775.00" width="131.00" height="68.00" fill="#858584" />
<rect x="1159.00" y="843.00" width="131.00" height="69.00" fill="#7f7f7f" />
<text x="1215.22" y="932.50" font-size="16.72" font-weight="normal" fill="#ffffff" textLength="18.59" lengthAdjust="spacingAndGlyphs" >50</text>
<rect x="1315.00" y="773.00" width="135.00" height="141.00" fill="#ececec" />
<rect x="1317.00" y="775.00" width="131.00" height="68.00" fill="#9f9e9c" />
<rect x="1317.00" y="843.00" width="131.00" height="69.00" fill="#999999" />
<text x="1373.22" y="932.50" font-size="16.72" font-weight="normal" fill="#ffffff" textLength="18.59" lengthAdjust="spacingAndGlyphs" >60</text>
<rect x="1473.00" y="773.00" width="135.00" height="141.00" fill="#ececec" />
<rect x="1475.00" y="775.00" width="131.00" height="68.00" fill="#b5b4b1" />
<rect x="1475.00" y="843.00" width="131.00" height="69.00" fill="#b2b2b2" />
<text x="1531.22" y="932.50" font-size="16.72" font-weight="normal" fill="#ffffff" textLength="18.59" lengthAdjust="spacingAndGlyphs" >70</text>
<rect x="1631.00" y="773.00" width="135.00" height="141.00" fill="#ececec" />
<rect x="1633.00" y="775.00" width="131.00" height="68.00" fill="#cecdc9" />
<rect x="1633.00" y="843.00" width="131.00" height="69.00" fill="#cccccc" />
<text x="1689.22" y="932.50" font-size="16.72" font-weight="normal" fill="#ffffff" textLength="18.59" lengthAdjust="spacingAndGlyphs" >80</text>
<rect x="1789.00" y="773.00" width="135.00" height="141.00" fill="#ececec" />
<rect x="1791.00" y="775.00" width="131.00" height="68.00" fill="#e5e4e1" />
<rect x="1791.00" y="843.00" width="131.00" height="69.00" fill="#e5e5e5" />
<text x="1847.22" y="932.50" font-size="16.72" font-weight="normal" fill="#ffffff" textLength="18.59" lengthAdjust="spacingAndGlyphs" >90</text>
<rect x="1947.00" y="773.00" width="135.00" height="141.00" fill="#ececec" />
<rect x="1949.00" y="775.00" width="131.00" height="68.00" fill="#fdfdf8" />
<rect x="1949.00" y="843.00" width="131.00" height="69.00" fill="#ffffff" />
<text x="2000.54" y="932.50" font-size="16.72" font-weight="normal" fill="#ffffff" textLength="27.89" lengthAdjust="spacingAndGlyphs" >100</text>
<g transform="translate(356.80,827.60) rotate(-90)"><text x="-0.00" y="0" font-size="18.90" fill="#fff" textLength="46.59" lengthAdjust="spacingAndGlyphs">Actual</text></g>
<g transform="translate(356.80,905.90) rotate(-90)"><text x="-0.00" y="0" font-size="18.31" fill="#fff" textLength="46.69" lengthAdjust="spacingAndGlyphs">Target</text></g>
<text x="21.90" y="1018.00" font-size="42.59" font-weight="normal" fill="#f0f0f0" textLength="298.80" lengthAdjust="spacingAndGlyphs" >Current Reading</text>
<text x="21.50" y="1076.00" font-size="34.88" font-weight="normal" fill="#f0f0f0" textLength="139.48" lengthAdjust="spacingAndGlyphs" >x: 0,3154</text>
<text x="21.50" y="1132.30" font-size="34.88" font-weight="normal" fill="#f0f0f0" textLength="139.98" lengthAdjust="spacingAndGlyphs" >y: 0,3337</text>
<text x="21.50" y="1188.80" font-size="34.88" font-weight="normal" fill="#f0f0f0" textLength="150.94" lengthAdjust="spacingAndGlyphs" >fL: 133,84</text>
<text x="21.50" y="1244.80" font-size="34.88" font-weight="normal" fill="#f0f0f0" textLength="216.98" lengthAdjust="spacingAndGlyphs" >cd/m²: 458,55</text>
<rect x="450.00" y="975.00" width="402.00" height="295.00" fill="#1c1c1c" />
<rect x="460.00" y="984.50" width="383.00" height="279.00" fill="#333333" />
<rect x="512.00" y="989.00" width="326.00" height="236.00" fill="url(#cieMid)" />
<rect x="512" y="989" width="326" height="141.6" fill="url(#cieTop)" mask="url(#mTop)"/>
<rect x="512" y="1083.4" width="326" height="141.6" fill="url(#cieBot)" mask="url(#mBot)"/>
<rect x="512.00" y="989.00" width="326.00" height="236.00" fill="url(#cieW)" />
<svg x="512" y="989" width="326" height="236" viewBox="512 989 326 236" overflow="hidden">
<polyline points="548.0,1227.6 555.5,1222.1 563.0,1216.7 570.5,1211.3 577.9,1205.9 585.4,1200.5 592.9,1195.1 600.4,1189.7 607.9,1184.4 615.4,1179.0 622.9,1173.7 630.4,1168.4 637.8,1163.1 645.3,1157.9 652.8,1152.6 660.3,1147.4 667.8,1142.1 675.3,1136.9 682.8,1131.7 690.3,1126.5 697.7,1121.4 705.2,1116.2 712.7,1111.1 720.2,1105.9 727.7,1100.8 735.2,1095.7 742.7,1090.7 750.2,1085.6 757.6,1080.5 765.1,1075.5 772.6,1070.5 780.1,1065.5 787.6,1060.5 795.1,1055.5 802.6,1050.5 810.1,1045.6 817.5,1040.7 825.0,1035.7 832.5,1030.8 840.0,1025.9" fill="none" stroke="#000" stroke-width="3" stroke-linejoin="round"/>
<rect x="664.5" y="1096.5" width="19" height="20" fill="#fafafa" stroke="#000" stroke-width="2"/>
<circle cx="707.4" cy="1078.1" r="6.2" fill="#333" stroke="#111" stroke-width="1.3"/>
<circle cx="707.4" cy="1072" r="6.2" fill="#4a4a4a" stroke="#111" stroke-width="1.3"/>
<circle cx="711.5" cy="1102.2" r="6.2" fill="#1c1c1c" stroke="#111" stroke-width="1.3"/>
<circle cx="686.5" cy="1089" r="6.2" fill="#999" stroke="#111" stroke-width="1.3"/>
<circle cx="687.1" cy="1095.4" r="6.2" fill="#aaa" stroke="#111" stroke-width="1.3"/>
<circle cx="694.6" cy="1093.9" r="6.2" fill="#ccc" stroke="#111" stroke-width="1.3"/>
<circle cx="696.9" cy="1087.1" r="6.2" fill="#e2e2e2" stroke="#111" stroke-width="1.3"/>
<circle cx="690.9" cy="1083.1" r="6.2" fill="#fff" stroke="#111" stroke-width="1.3"/>
</svg>
<rect x="511.5" y="988.5" width="327" height="237" fill="none" stroke="#9a9a9a" stroke-width="2"/>
<rect x="503.00" y="1006.00" width="7.00" height="2.00" fill="#e6e6e6" />
<text x="463.50" y="1014.60" font-size="19.19" font-weight="normal" fill="#dcdcdc" textLength="38.53" lengthAdjust="spacingAndGlyphs" >0,35</text>
<rect x="503.00" y="1053.10" width="7.00" height="2.00" fill="#e6e6e6" />
<text x="463.50" y="1061.70" font-size="19.19" font-weight="normal" fill="#dcdcdc" textLength="38.53" lengthAdjust="spacingAndGlyphs" >0,34</text>
<rect x="503.00" y="1100.20" width="7.00" height="2.00" fill="#e6e6e6" />
<text x="463.50" y="1108.80" font-size="19.19" font-weight="normal" fill="#dcdcdc" textLength="38.53" lengthAdjust="spacingAndGlyphs" >0,33</text>
<rect x="503.00" y="1147.30" width="7.00" height="2.00" fill="#e6e6e6" />
<text x="463.50" y="1155.90" font-size="19.19" font-weight="normal" fill="#dcdcdc" textLength="38.53" lengthAdjust="spacingAndGlyphs" >0,32</text>
<rect x="503.00" y="1194.40" width="7.00" height="2.00" fill="#e6e6e6" />
<text x="463.50" y="1203.00" font-size="19.19" font-weight="normal" fill="#dcdcdc" textLength="38.53" lengthAdjust="spacingAndGlyphs" >0,31</text>
<rect x="525.00" y="1227.00" width="2.00" height="7.00" fill="#e6e6e6" />
<text x="506.46" y="1253.80" font-size="18.60" font-weight="normal" fill="#dcdcdc" textLength="39.11" lengthAdjust="spacingAndGlyphs" >0,29</text>
<rect x="590.00" y="1227.00" width="2.00" height="7.00" fill="#e6e6e6" />
<text x="577.04" y="1253.80" font-size="18.60" font-weight="normal" fill="#dcdcdc" textLength="27.93" lengthAdjust="spacingAndGlyphs" >0,3</text>
<rect x="655.00" y="1227.00" width="2.00" height="7.00" fill="#e6e6e6" />
<text x="636.46" y="1253.80" font-size="18.60" font-weight="normal" fill="#dcdcdc" textLength="39.11" lengthAdjust="spacingAndGlyphs" >0,31</text>
<rect x="720.00" y="1227.00" width="2.00" height="7.00" fill="#e6e6e6" />
<text x="701.46" y="1253.80" font-size="18.60" font-weight="normal" fill="#dcdcdc" textLength="39.11" lengthAdjust="spacingAndGlyphs" >0,32</text>
<rect x="785.00" y="1227.00" width="2.00" height="7.00" fill="#e6e6e6" />
<text x="766.46" y="1253.80" font-size="18.60" font-weight="normal" fill="#dcdcdc" textLength="39.11" lengthAdjust="spacingAndGlyphs" >0,33</text>
<rect x="862.00" y="956.00" width="1332.00" height="288.00" fill="#000000" />
<rect x="864.00" y="958.00" width="1328.00" height="38.00" fill="url(#thead)" />
<rect x="864.00" y="996.00" width="1328.00" height="35.73" fill="#424242" />
<text x="880.50" y="1021.80" font-size="23.26" font-weight="bold" fill="#f2f2f2" textLength="80.73" lengthAdjust="spacingAndGlyphs" >x: CIE31</text>
<text x="1078.30" y="1021.80" font-size="22.82" font-weight="normal" fill="#f0f0f0" textLength="53.23" lengthAdjust="spacingAndGlyphs" >0,249</text>
<text x="1191.00" y="1021.80" font-size="22.82" font-weight="normal" fill="#f0f0f0" textLength="53.23" lengthAdjust="spacingAndGlyphs" >0,318</text>
<text x="1291.70" y="1021.80" font-size="22.82" font-weight="normal" fill="#f0f0f0" textLength="53.23" lengthAdjust="spacingAndGlyphs" >0,318</text>
<text x="1392.40" y="1021.80" font-size="22.82" font-weight="normal" fill="#f0f0f0" textLength="53.23" lengthAdjust="spacingAndGlyphs" >0,318</text>
<text x="1493.20" y="1021.80" font-size="22.82" font-weight="normal" fill="#f0f0f0" textLength="53.23" lengthAdjust="spacingAndGlyphs" >0,315</text>
<text x="1593.70" y="1021.80" font-size="22.82" font-weight="normal" fill="#f0f0f0" textLength="53.23" lengthAdjust="spacingAndGlyphs" >0,315</text>
<text x="1694.20" y="1021.80" font-size="22.82" font-weight="normal" fill="#f0f0f0" textLength="53.23" lengthAdjust="spacingAndGlyphs" >0,315</text>
<text x="1795.30" y="1021.80" font-size="22.82" font-weight="normal" fill="#f0f0f0" textLength="53.23" lengthAdjust="spacingAndGlyphs" >0,315</text>
<text x="1895.80" y="1021.80" font-size="22.82" font-weight="normal" fill="#f0f0f0" textLength="53.23" lengthAdjust="spacingAndGlyphs" >0,316</text>
<text x="1996.50" y="1021.80" font-size="22.82" font-weight="normal" fill="#f0f0f0" textLength="53.23" lengthAdjust="spacingAndGlyphs" >0,316</text>
<text x="2097.00" y="1021.80" font-size="22.82" font-weight="normal" fill="#f0f0f0" textLength="53.23" lengthAdjust="spacingAndGlyphs" >0,315</text>
<rect x="864.00" y="1031.43" width="1328.00" height="35.73" fill="url(#lrow)" />
<text x="880.50" y="1057.23" font-size="23.26" font-weight="bold" fill="#f2f2f2" textLength="80.73" lengthAdjust="spacingAndGlyphs" >y: CIE31</text>
<text x="1078.30" y="1057.23" font-size="22.82" font-weight="normal" fill="#f0f0f0" textLength="53.23" lengthAdjust="spacingAndGlyphs" >0,229</text>
<text x="1191.00" y="1057.23" font-size="22.82" font-weight="normal" fill="#f0f0f0" textLength="53.23" lengthAdjust="spacingAndGlyphs" >0,330</text>
<text x="1291.70" y="1057.23" font-size="22.82" font-weight="normal" fill="#f0f0f0" textLength="53.23" lengthAdjust="spacingAndGlyphs" >0,335</text>
<text x="1392.40" y="1057.23" font-size="22.82" font-weight="normal" fill="#f0f0f0" textLength="53.23" lengthAdjust="spacingAndGlyphs" >0,336</text>
<text x="1493.20" y="1057.23" font-size="22.82" font-weight="normal" fill="#f0f0f0" textLength="53.23" lengthAdjust="spacingAndGlyphs" >0,334</text>
<text x="1593.70" y="1057.23" font-size="22.82" font-weight="normal" fill="#f0f0f0" textLength="53.23" lengthAdjust="spacingAndGlyphs" >0,334</text>
<text x="1694.20" y="1057.23" font-size="22.82" font-weight="normal" fill="#f0f0f0" textLength="53.23" lengthAdjust="spacingAndGlyphs" >0,332</text>
<text x="1795.30" y="1057.23" font-size="22.82" font-weight="normal" fill="#f0f0f0" textLength="53.23" lengthAdjust="spacingAndGlyphs" >0,331</text>
<text x="1895.80" y="1057.23" font-size="22.82" font-weight="normal" fill="#f0f0f0" textLength="53.23" lengthAdjust="spacingAndGlyphs" >0,332</text>
<text x="1996.50" y="1057.23" font-size="22.82" font-weight="normal" fill="#f0f0f0" textLength="53.23" lengthAdjust="spacingAndGlyphs" >0,333</text>
<text x="2097.00" y="1057.23" font-size="22.82" font-weight="normal" fill="#f0f0f0" textLength="53.23" lengthAdjust="spacingAndGlyphs" >0,334</text>
<rect x="864.00" y="1066.86" width="1328.00" height="35.73" fill="#424242" />
<text x="880.50" y="1092.66" font-size="23.26" font-weight="bold" fill="#f2f2f2" textLength="12.24" lengthAdjust="spacingAndGlyphs" >Y</text>
<text x="1078.30" y="1092.66" font-size="22.82" font-weight="normal" fill="#f0f0f0" textLength="53.23" lengthAdjust="spacingAndGlyphs" >0,424</text>
<text x="1191.00" y="1092.66" font-size="22.82" font-weight="normal" fill="#f0f0f0" textLength="53.23" lengthAdjust="spacingAndGlyphs" >3,238</text>
<text x="1291.70" y="1092.66" font-size="22.82" font-weight="normal" fill="#f0f0f0" textLength="65.06" lengthAdjust="spacingAndGlyphs" >13,668</text>
<text x="1392.40" y="1092.66" font-size="22.82" font-weight="normal" fill="#f0f0f0" textLength="65.06" lengthAdjust="spacingAndGlyphs" >32,510</text>
<text x="1493.20" y="1092.66" font-size="22.82" font-weight="normal" fill="#f0f0f0" textLength="65.06" lengthAdjust="spacingAndGlyphs" >61,799</text>
<text x="1593.70" y="1092.66" font-size="22.82" font-weight="normal" fill="#f0f0f0" textLength="76.89" lengthAdjust="spacingAndGlyphs" >101,604</text>
<text x="1694.20" y="1092.66" font-size="22.82" font-weight="normal" fill="#f0f0f0" textLength="76.89" lengthAdjust="spacingAndGlyphs" >149,561</text>
<text x="1795.30" y="1092.66" font-size="22.82" font-weight="normal" fill="#f0f0f0" textLength="76.89" lengthAdjust="spacingAndGlyphs" >206,897</text>
<text x="1895.80" y="1092.66" font-size="22.82" font-weight="normal" fill="#f0f0f0" textLength="76.89" lengthAdjust="spacingAndGlyphs" >276,675</text>
<text x="1996.50" y="1092.66" font-size="22.82" font-weight="normal" fill="#f0f0f0" textLength="76.89" lengthAdjust="spacingAndGlyphs" >360,549</text>
<text x="2097.00" y="1092.66" font-size="22.82" font-weight="normal" fill="#f0f0f0" textLength="76.89" lengthAdjust="spacingAndGlyphs" >458,554</text>
<rect x="864.00" y="1102.29" width="1328.00" height="35.73" fill="url(#lrow)" />
<text x="880.50" y="1128.09" font-size="23.26" font-weight="bold" fill="#f2f2f2" textLength="85.47" lengthAdjust="spacingAndGlyphs" >Target Y</text>
<text x="1078.30" y="1128.09" font-size="22.82" font-weight="normal" fill="#f0f0f0" textLength="53.23" lengthAdjust="spacingAndGlyphs" >0,000</text>
<text x="1191.00" y="1128.09" font-size="22.82" font-weight="normal" fill="#f0f0f0" textLength="53.23" lengthAdjust="spacingAndGlyphs" >4,737</text>
<text x="1291.70" y="1128.09" font-size="22.82" font-weight="normal" fill="#f0f0f0" textLength="65.06" lengthAdjust="spacingAndGlyphs" >15,180</text>
<text x="1392.40" y="1128.09" font-size="22.82" font-weight="normal" fill="#f0f0f0" textLength="65.06" lengthAdjust="spacingAndGlyphs" >33,141</text>
<text x="1493.20" y="1128.09" font-size="22.82" font-weight="normal" fill="#f0f0f0" textLength="65.06" lengthAdjust="spacingAndGlyphs" >60,927</text>
<text x="1593.70" y="1128.09" font-size="22.82" font-weight="normal" fill="#f0f0f0" textLength="65.06" lengthAdjust="spacingAndGlyphs" >98,984</text>
<text x="1694.20" y="1128.09" font-size="22.82" font-weight="normal" fill="#f0f0f0" textLength="76.89" lengthAdjust="spacingAndGlyphs" >146,071</text>
<text x="1795.30" y="1128.09" font-size="22.82" font-weight="normal" fill="#f0f0f0" textLength="76.89" lengthAdjust="spacingAndGlyphs" >204,149</text>
<text x="1895.80" y="1128.09" font-size="22.82" font-weight="normal" fill="#f0f0f0" textLength="76.89" lengthAdjust="spacingAndGlyphs" >276,887</text>
<text x="1996.50" y="1128.09" font-size="22.82" font-weight="normal" fill="#f0f0f0" textLength="76.89" lengthAdjust="spacingAndGlyphs" >362,853</text>
<text x="2097.00" y="1128.09" font-size="22.82" font-weight="normal" fill="#f0f0f0" textLength="76.89" lengthAdjust="spacingAndGlyphs" >458,554</text>
<rect x="864.00" y="1137.72" width="1328.00" height="35.73" fill="#424242" />
<text x="880.50" y="1163.52" font-size="23.26" font-weight="bold" fill="#f2f2f2" textLength="174.48" lengthAdjust="spacingAndGlyphs" >Gamma Log/Log</text>
<text x="1078.30" y="1163.52" font-size="22.82" font-weight="normal" fill="#f0f0f0" textLength="53.23" lengthAdjust="spacingAndGlyphs" >1,278</text>
<text x="1191.00" y="1163.52" font-size="22.82" font-weight="normal" fill="#f0f0f0" textLength="53.23" lengthAdjust="spacingAndGlyphs" >2,169</text>
<text x="1291.70" y="1163.52" font-size="22.82" font-weight="normal" fill="#f0f0f0" textLength="53.23" lengthAdjust="spacingAndGlyphs" >2,183</text>
<text x="1392.40" y="1163.52" font-size="22.82" font-weight="normal" fill="#f0f0f0" textLength="53.23" lengthAdjust="spacingAndGlyphs" >2,186</text>
<text x="1493.20" y="1163.52" font-size="22.82" font-weight="normal" fill="#f0f0f0" textLength="53.23" lengthAdjust="spacingAndGlyphs" >2,187</text>
<text x="1593.70" y="1163.52" font-size="22.82" font-weight="normal" fill="#f0f0f0" textLength="53.23" lengthAdjust="spacingAndGlyphs" >2,186</text>
<text x="1694.20" y="1163.52" font-size="22.82" font-weight="normal" fill="#f0f0f0" textLength="53.23" lengthAdjust="spacingAndGlyphs" >2,193</text>
<text x="1795.30" y="1163.52" font-size="22.82" font-weight="normal" fill="#f0f0f0" textLength="53.23" lengthAdjust="spacingAndGlyphs" >2,214</text>
<text x="1895.80" y="1163.52" font-size="22.82" font-weight="normal" fill="#f0f0f0" textLength="53.23" lengthAdjust="spacingAndGlyphs" >2,264</text>
<text x="1996.50" y="1163.52" font-size="22.82" font-weight="normal" fill="#f0f0f0" textLength="53.23" lengthAdjust="spacingAndGlyphs" >2,330</text>
<text x="2097.00" y="1163.52" font-size="22.82" font-weight="normal" fill="#f0f0f0" textLength="53.23" lengthAdjust="spacingAndGlyphs" >2,275</text>
<rect x="864.00" y="1173.15" width="1328.00" height="35.73" fill="url(#lrow)" />
<text x="880.50" y="1198.95" font-size="23.26" font-weight="bold" fill="#f2f2f2" textLength="39.30" lengthAdjust="spacingAndGlyphs" >CCT</text>
<text x="1078.30" y="1198.95" font-size="22.82" font-weight="normal" fill="#f0f0f0" textLength="100.55" lengthAdjust="spacingAndGlyphs" >35189,000</text>
<text x="1191.00" y="1198.95" font-size="22.82" font-weight="normal" fill="#f0f0f0" textLength="88.72" lengthAdjust="spacingAndGlyphs" >6197,000</text>
<text x="1291.70" y="1198.95" font-size="22.82" font-weight="normal" fill="#f0f0f0" textLength="88.72" lengthAdjust="spacingAndGlyphs" >6200,000</text>
<text x="1392.40" y="1198.95" font-size="22.82" font-weight="normal" fill="#f0f0f0" textLength="88.72" lengthAdjust="spacingAndGlyphs" >6194,000</text>
<text x="1493.20" y="1198.95" font-size="22.82" font-weight="normal" fill="#f0f0f0" textLength="88.72" lengthAdjust="spacingAndGlyphs" >6341,000</text>
<text x="1593.70" y="1198.95" font-size="22.82" font-weight="normal" fill="#f0f0f0" textLength="88.72" lengthAdjust="spacingAndGlyphs" >6332,000</text>
<text x="1694.20" y="1198.95" font-size="22.82" font-weight="normal" fill="#f0f0f0" textLength="88.72" lengthAdjust="spacingAndGlyphs" >6358,000</text>
<text x="1795.30" y="1198.95" font-size="22.82" font-weight="normal" fill="#f0f0f0" textLength="88.72" lengthAdjust="spacingAndGlyphs" >6377,000</text>
<text x="1895.80" y="1198.95" font-size="22.82" font-weight="normal" fill="#f0f0f0" textLength="88.72" lengthAdjust="spacingAndGlyphs" >6318,000</text>
<text x="1996.50" y="1198.95" font-size="22.82" font-weight="normal" fill="#f0f0f0" textLength="88.72" lengthAdjust="spacingAndGlyphs" >6299,000</text>
<text x="2097.00" y="1198.95" font-size="22.82" font-weight="normal" fill="#f0f0f0" textLength="88.72" lengthAdjust="spacingAndGlyphs" >6328,000</text>
<rect x="864.00" y="1208.58" width="1328.00" height="35.73" fill="#424242" />
<text x="880.50" y="1234.38" font-size="23.26" font-weight="bold" fill="#f2f2f2" textLength="84.46" lengthAdjust="spacingAndGlyphs" >ΔE 2000</text>
<text x="1078.30" y="1234.38" font-size="22.82" font-weight="normal" fill="#f0f0f0" textLength="53.23" lengthAdjust="spacingAndGlyphs" >1,757</text>
<text x="1191.00" y="1234.38" font-size="22.82" font-weight="normal" fill="#f0f0f0" textLength="53.23" lengthAdjust="spacingAndGlyphs" >1,891</text>
<text x="1291.70" y="1234.38" font-size="22.82" font-weight="normal" fill="#f0f0f0" textLength="53.23" lengthAdjust="spacingAndGlyphs" >1,333</text>
<text x="1392.40" y="1234.38" font-size="22.82" font-weight="normal" fill="#f0f0f0" textLength="53.23" lengthAdjust="spacingAndGlyphs" >1,538</text>
<text x="1493.20" y="1234.38" font-size="22.82" font-weight="normal" fill="#f0f0f0" textLength="53.23" lengthAdjust="spacingAndGlyphs" >1,443</text>
<text x="1593.70" y="1234.38" font-size="22.82" font-weight="normal" fill="#f0f0f0" textLength="53.23" lengthAdjust="spacingAndGlyphs" >1,648</text>
<text x="1694.20" y="1234.38" font-size="22.82" font-weight="normal" fill="#f0f0f0" textLength="53.23" lengthAdjust="spacingAndGlyphs" >1,368</text>
<text x="1795.30" y="1234.38" font-size="22.82" font-weight="normal" fill="#f0f0f0" textLength="53.23" lengthAdjust="spacingAndGlyphs" >1,009</text>
<text x="1895.80" y="1234.38" font-size="22.82" font-weight="normal" fill="#f0f0f0" textLength="53.23" lengthAdjust="spacingAndGlyphs" >1,380</text>
<text x="1996.50" y="1234.38" font-size="22.82" font-weight="normal" fill="#f0f0f0" textLength="53.23" lengthAdjust="spacingAndGlyphs" >1,886</text>
<text x="2097.00" y="1234.38" font-size="22.82" font-weight="normal" fill="#f0f0f0" textLength="53.23" lengthAdjust="spacingAndGlyphs" >2,554</text>
<text x="1122.67" y="985.20" font-size="20.64" font-weight="normal" fill="#ffffff" textLength="11.48" lengthAdjust="spacingAndGlyphs" stroke="#ffffff" stroke-width="0.45">0</text>
<text x="1223.74" y="985.20" font-size="20.64" font-weight="normal" fill="#ffffff" textLength="22.96" lengthAdjust="spacingAndGlyphs" stroke="#ffffff" stroke-width="0.45">10</text>
<text x="1324.54" y="985.20" font-size="20.64" font-weight="normal" fill="#ffffff" textLength="22.96" lengthAdjust="spacingAndGlyphs" stroke="#ffffff" stroke-width="0.45">20</text>
<text x="1425.24" y="985.20" font-size="20.64" font-weight="normal" fill="#ffffff" textLength="22.96" lengthAdjust="spacingAndGlyphs" stroke="#ffffff" stroke-width="0.45">30</text>
<text x="1526.04" y="985.20" font-size="20.64" font-weight="normal" fill="#ffffff" textLength="22.96" lengthAdjust="spacingAndGlyphs" stroke="#ffffff" stroke-width="0.45">40</text>
<text x="1626.54" y="985.20" font-size="20.64" font-weight="normal" fill="#ffffff" textLength="22.96" lengthAdjust="spacingAndGlyphs" stroke="#ffffff" stroke-width="0.45">50</text>
<text x="1727.54" y="985.20" font-size="20.64" font-weight="normal" fill="#ffffff" textLength="22.96" lengthAdjust="spacingAndGlyphs" stroke="#ffffff" stroke-width="0.45">60</text>
<text x="1828.54" y="985.20" font-size="20.64" font-weight="normal" fill="#ffffff" textLength="22.96" lengthAdjust="spacingAndGlyphs" stroke="#ffffff" stroke-width="0.45">70</text>
<text x="1929.04" y="985.20" font-size="20.64" font-weight="normal" fill="#ffffff" textLength="22.96" lengthAdjust="spacingAndGlyphs" stroke="#ffffff" stroke-width="0.45">80</text>
<text x="2029.54" y="985.20" font-size="20.64" font-weight="normal" fill="#ffffff" textLength="22.96" lengthAdjust="spacingAndGlyphs" stroke="#ffffff" stroke-width="0.45">90</text>
<text x="2124.77" y="985.20" font-size="20.64" font-weight="normal" fill="#ffffff" textLength="34.44" lengthAdjust="spacingAndGlyphs" stroke="#ffffff" stroke-width="0.45">100</text>
<rect x="1672.00" y="1328.00" width="298.00" height="64.00" fill="url(#tbdark)" />
<path d="M2 1387 V1334 Q2 1329.5 6.5 1329.5 H147.5 Q152 1329.5 152 1334 V1387 Q152 1390 149 1390 H5 Q2 1390 2 1387 Z" fill="url(#swbtn)"/>
<rect x="7" y="1334" width="140" height="36" rx="3.5" fill="#020202"/>
<text x="73.97" y="1385.00" font-size="10.90" font-weight="normal" fill="#2e2e36" textLength="6.06" lengthAdjust="spacingAndGlyphs" stroke="#2e2e36" stroke-width="0.3">0</text>
<path d="M154 1387 V1334 Q154 1329.5 158.5 1329.5 H299.5 Q304 1329.5 304 1334 V1387 Q304 1390 301 1390 H157 Q154 1390 154 1387 Z" fill="url(#swbtn)"/>
<rect x="159" y="1334" width="140" height="36" rx="3.5" fill="#1b1b1b"/>
<text x="222.95" y="1385.00" font-size="10.90" font-weight="normal" fill="#2e2e36" textLength="12.13" lengthAdjust="spacingAndGlyphs" stroke="#2e2e36" stroke-width="0.3">10</text>
<path d="M306 1387 V1334 Q306 1329.5 310.5 1329.5 H451.5 Q456 1329.5 456 1334 V1387 Q456 1390 453 1390 H309 Q306 1390 306 1387 Z" fill="url(#swbtn)"/>
<rect x="311" y="1334" width="140" height="36" rx="3.5" fill="#333333"/>
<text x="374.95" y="1385.00" font-size="10.90" font-weight="normal" fill="#2e2e36" textLength="12.13" lengthAdjust="spacingAndGlyphs" stroke="#2e2e36" stroke-width="0.3">20</text>
<path d="M458 1387 V1334 Q458 1329.5 462.5 1329.5 H603.5 Q608 1329.5 608 1334 V1387 Q608 1390 605 1390 H461 Q458 1390 458 1387 Z" fill="url(#swbtn)"/>
<rect x="463" y="1334" width="140" height="36" rx="3.5" fill="#4c4c4c"/>
<text x="526.95" y="1385.00" font-size="10.90" font-weight="normal" fill="#2e2e36" textLength="12.13" lengthAdjust="spacingAndGlyphs" stroke="#2e2e36" stroke-width="0.3">30</text>
<path d="M610 1387 V1334 Q610 1329.5 614.5 1329.5 H755.5 Q760 1329.5 760 1334 V1387 Q760 1390 757 1390 H613 Q610 1390 610 1387 Z" fill="url(#swbtn)"/>
<rect x="615" y="1334" width="140" height="36" rx="3.5" fill="#666666"/>
<text x="678.95" y="1385.00" font-size="10.90" font-weight="normal" fill="#2e2e36" textLength="12.13" lengthAdjust="spacingAndGlyphs" stroke="#2e2e36" stroke-width="0.3">40</text>
<path d="M762 1387 V1334 Q762 1329.5 766.5 1329.5 H907.5 Q912 1329.5 912 1334 V1387 Q912 1390 909 1390 H765 Q762 1390 762 1387 Z" fill="url(#swbtn)"/>
<rect x="767" y="1334" width="140" height="36" rx="3.5" fill="#7f7f7f"/>
<text x="830.95" y="1385.00" font-size="10.90" font-weight="normal" fill="#2e2e36" textLength="12.13" lengthAdjust="spacingAndGlyphs" stroke="#2e2e36" stroke-width="0.3">50</text>
<path d="M914 1387 V1334 Q914 1329.5 918.5 1329.5 H1059.5 Q1064 1329.5 1064 1334 V1387 Q1064 1390 1061 1390 H917 Q914 1390 914 1387 Z" fill="url(#swbtn)"/>
<rect x="919" y="1334" width="140" height="36" rx="3.5" fill="#999999"/>
<text x="982.95" y="1385.00" font-size="10.90" font-weight="normal" fill="#2e2e36" textLength="12.13" lengthAdjust="spacingAndGlyphs" stroke="#2e2e36" stroke-width="0.3">60</text>
<path d="M1066 1387 V1334 Q1066 1329.5 1070.5 1329.5 H1211.5 Q1216 1329.5 1216 1334 V1387 Q1216 1390 1213 1390 H1069 Q1066 1390 1066 1387 Z" fill="url(#swbtn)"/>
<rect x="1071" y="1334" width="140" height="36" rx="3.5" fill="#b2b2b2"/>
<text x="1134.95" y="1385.00" font-size="10.90" font-weight="normal" fill="#2e2e36" textLength="12.13" lengthAdjust="spacingAndGlyphs" stroke="#2e2e36" stroke-width="0.3">70</text>
<path d="M1218 1387 V1334 Q1218 1329.5 1222.5 1329.5 H1363.5 Q1368 1329.5 1368 1334 V1387 Q1368 1390 1365 1390 H1221 Q1218 1390 1218 1387 Z" fill="url(#swbtn)"/>
<rect x="1223" y="1334" width="140" height="36" rx="3.5" fill="#cccccc"/>
<text x="1286.95" y="1385.00" font-size="10.90" font-weight="normal" fill="#2e2e36" textLength="12.13" lengthAdjust="spacingAndGlyphs" stroke="#2e2e36" stroke-width="0.3">80</text>
<path d="M1370 1387 V1334 Q1370 1329.5 1374.5 1329.5 H1515.5 Q1520 1329.5 1520 1334 V1387 Q1520 1390 1517 1390 H1373 Q1370 1390 1370 1387 Z" fill="url(#swbtn)"/>
<rect x="1375" y="1334" width="140" height="36" rx="3.5" fill="#e5e5e5"/>
<text x="1438.95" y="1385.00" font-size="10.90" font-weight="normal" fill="#2e2e36" textLength="12.13" lengthAdjust="spacingAndGlyphs" stroke="#2e2e36" stroke-width="0.3">90</text>
<path d="M1522 1387 V1334 Q1522 1329.5 1526.5 1329.5 H1667.5 Q1672 1329.5 1672 1334 V1387 Q1672 1390 1669 1390 H1525 Q1522 1390 1522 1387 Z" fill="url(#swsel)"/>
<rect x="1527" y="1334" width="140" height="36" rx="3.5" fill="#ffffff"/>
<text x="1587.90" y="1385.00" font-size="10.90" font-weight="bold" fill="#ffffff" textLength="18.19" lengthAdjust="spacingAndGlyphs" >100</text>
<path d="M1969 1392 V1333 Q1969 1329 1973 1329 H2013 Q2017 1329 2017 1333 V1392 Z" fill="url(#ctl)"/>
<rect x="1969.00" y="1346.50" width="48.00" height="1.50" fill="#555" />
<circle cx="1993" cy="1338" r="7" fill="url(#ctlc)"/>
<path d="M1989 1340.5 H1997 L1993 1335.5 Z" fill="#333"/>
<rect x="1978.5" y="1354.5" width="28.5" height="28.5" rx="3" fill="none" stroke="#222" stroke-width="2.5"/>
<rect x="1986.00" y="1362.00" width="14.00" height="13.00" fill="#111" />
<path d="M2018 1359 V1333 Q2018 1329 2022 1329 H2244 V1359 Z" fill="url(#ctl)"/>
<rect x="2064.30" y="1329.00" width="1.00" height="30.00" fill="#5a5a5a" />
<rect x="2109.00" y="1329.00" width="1.00" height="30.00" fill="#5a5a5a" />
<rect x="2154.30" y="1329.00" width="1.00" height="30.00" fill="#5a5a5a" />
<rect x="2199.20" y="1329.00" width="1.00" height="30.00" fill="#5a5a5a" />
<circle cx="2041" cy="1344" r="10" fill="url(#ctlc)"/>
<circle cx="2087" cy="1344" r="10" fill="url(#ctlc)"/>
<circle cx="2131.5" cy="1344" r="10" fill="url(#ctlc)"/>
<circle cx="2176.6" cy="1344" r="10" fill="url(#ctlc)"/>
<circle cx="2221.5" cy="1344" r="10" fill="url(#ctlc)"/>
<rect x="2037.00" y="1340.00" width="8.00" height="8.00" fill="#333" />
<path d="M2083.5 1339 L2091.5 1344.5 L2083.5 1350 Z" fill="#333"/>
<path d="M2128 1339 H2126 V1349 H2128 M2135 1339 H2137 V1349 H2135" stroke="#333" stroke-width="1.6" fill="none"/>
<circle cx="2130" cy="1344" r="0.9" fill="#333"/><circle cx="2133" cy="1344" r="0.9" fill="#333"/>
<path d="M2176.6 1344 C2174 1340.5 2171 1340.5 2171 1344 C2171 1347.5 2174 1347.5 2176.6 1344 C2179.2 1340.5 2182.2 1340.5 2182.2 1344 C2182.2 1347.5 2179.2 1347.5 2176.6 1344 Z" stroke="#333" stroke-width="1.6" fill="none"/>
<path d="M2216.5 1345 A5 5 0 0 1 2225 1340 M2226.5 1343 A5 5 0 0 1 2218 1348" stroke="#333" stroke-width="1.8" fill="none"/>
<path d="M2224 1337.5 L2227 1341 L2222.5 1341.5 Z M2219 1350.5 L2216 1347 L2220.5 1346.5 Z" fill="#333"/>
<rect x="2244.00" y="1329.00" width="46.00" height="30.00" fill="url(#dkbg)" />
<circle cx="2267.5" cy="1344" r="10" fill="url(#dkc)"/>
<path d="M2018 1392 V1364 Q2018 1360 2022 1360 H2286 Q2290 1360 2290 1364 V1392 Z" fill="url(#ctl)"/>
<rect x="2154.00" y="1360.00" width="1.00" height="32.00" fill="#5a5a5a" />
<circle cx="2049" cy="1375" r="9.5" fill="url(#ctlc)"/>
<path d="M2051 1370.5 L2047 1375 L2051 1379.5 M2055 1370.5 L2051 1375 L2055 1379.5" stroke="#333" stroke-width="1.6" fill="none"/>
<circle cx="2261.5" cy="1375" r="9.5" fill="url(#ctlc)"/>
<path d="M2258 1370.5 L2262 1375 L2258 1379.5 M2262 1370.5 L2266 1375 L2262 1379.5" stroke="#333" stroke-width="1.6" fill="none"/>
<text x="2075.40" y="1383.00" font-size="22.24" font-weight="bold" fill="#333333" textLength="50.51" lengthAdjust="spacingAndGlyphs" >Back</text>
<text x="2182.30" y="1383.00" font-size="22.24" font-weight="bold" fill="#333333" textLength="51.44" lengthAdjust="spacingAndGlyphs" >Next</text>
<rect x="1.00" y="1390.00" width="2290.00" height="1.30" fill="#1e1e1e" />
<rect x="0.00" y="1391.30" width="2293.00" height="0.70" fill="#7a7a7a" />
</svg></body></html>
